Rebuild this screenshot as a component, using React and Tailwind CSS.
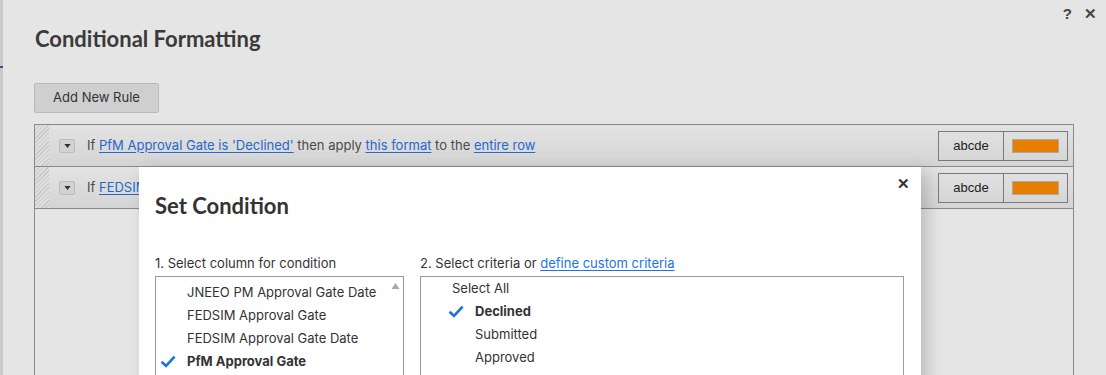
import React from "react";

const Check = ({ className }) => (
  <svg viewBox="0 0 16 13" className={className}>
    <path d="M1.6 6.8 L6 11 L14.6 1.6" fill="none" stroke="currentColor" strokeWidth="2.6" strokeLinejoin="miter" />
  </svg>
);

const DropBtn = () => (
  <div className="w-[16px] h-[14px] rounded-[2px] border border-[#bcbcbc] bg-[#d2d2d2] flex items-center justify-center shrink-0">
    <svg viewBox="0 0 8 5" className="w-[7px] h-[4px]">
      <path d="M0 0 L8 0 L4 5 Z" fill="#333" />
    </svg>
  </div>
);

const Hatch = () => (
  <div className="w-[14px] self-stretch shrink-0 bg-[repeating-linear-gradient(135deg,#c9c9c9_0px,#c9c9c9_1px,#dedede_1px,#dedede_3px)]" />
);

const Sample = () => (
  <div className="ml-auto mr-[5px] flex h-[30px] border border-[#7a7a7a]">
    <div className="w-[65px] border-r border-[#7a7a7a] flex items-center justify-center text-[13px] text-[#222] font-['Liberation_Sans',sans-serif]">
      abcde
    </div>
    <div className="w-[63px] flex items-center justify-center">
      <div className="w-[47px] h-[14px] bg-[#e67e00] border border-[#a9a9a9]" />
    </div>
  </div>
);

const Link = ({ children }) => <span className="text-[#2468cc] underline underline-offset-2">{children}</span>;

const Row = ({ children }) => (
  <div className="h-[42px] border-b border-[#8a8a8a] flex items-center bg-[linear-gradient(#e3e3e3,#d4d4d4)]">
    <Hatch />
    <div className="ml-[10px]">
      <DropBtn />
    </div>
    <div className="ml-[12px] text-[13px] text-[#4a4a4a] whitespace-nowrap">{children}</div>
    <Sample />
  </div>
);

export default function App() {
  return (
    <div className="w-[1106px] h-[375px] overflow-hidden flex bg-[#c9c9c9] font-['Inter',sans-serif]">
      <div className="w-[3px] shrink-0">
        <div className="mt-[66px] h-[2px] bg-[#3c4f86]" />
      </div>
      <div className="flex-1 bg-[#e5e5e5] relative">
        <div className="flex justify-end gap-[12px] pr-[9px] pt-[3px] h-[24px] text-[15px] font-bold text-[#444] font-['Liberation_Sans',sans-serif]">
          <span>?</span>
          <span>✕</span>
        </div>
        <div className="ml-[32px] mt-[0px] text-[22px] leading-[30px] font-bold text-[#3a3a3a] font-['Lato',sans-serif]">
          Conditional Formatting
        </div>
        <div className="ml-[31px] mt-[29px] w-[125px] h-[30px] rounded-[2px] border border-[#b9b9b9] bg-[#cfcfcf] flex items-center justify-center text-[13px] text-[#333]">
          Add New Rule
        </div>
        <div className="ml-[31px] mt-[11px] w-[1040px] h-[300px] border-x border-t border-[#8a8a8a]">
          <Row>
            If <Link>PfM Approval Gate is 'Declined'</Link> then apply <Link>this format</Link> to the <Link>entire row</Link>
          </Row>
          <Row>
            If <Link>FEDSIM Approval Gate is 'Declined'</Link> then apply <Link>this format</Link> to the <Link>entire row</Link>
          </Row>
        </div>

        <div className="absolute left-[136px] top-[167px] w-[782px] h-[260px] bg-white shadow-[6px_4px_16px_rgba(0,0,0,0.18)]">
          <div className="absolute right-[11px] top-[6px] text-[15px] font-bold text-[#333] font-['Liberation_Sans',sans-serif]">✕</div>
          <div className="pl-[16px] pt-[24px] text-[22px] leading-[30px] font-bold text-[#333] font-['Lato',sans-serif]">
            Set Condition
          </div>
          <div className="flex gap-[16px] pl-[16px] mt-[33px]">
            <div className="w-[249px]">
              <div className="text-[13px] leading-[18px] text-[#333] mb-[4px]">1. Select column for condition</div>
              <div className="relative h-[120px] border border-[#999] pt-[4px] text-[13px] text-[#333]">
                <svg viewBox="0 0 8 6" className="absolute right-[3px] top-[6px] w-[9px] h-[6px]">
                  <path d="M0 6 L4 0 L8 6 Z" fill="#a8a8a8" />
                </svg>
                {["JNEEO PM Approval Gate Date", "FEDSIM Approval Gate", "FEDSIM Approval Gate Date"].map((t) => (
                  <div key={t} className="h-[23px] flex items-center pl-[31px]">{t}</div>
                ))}
                <div className="h-[23px] flex items-center">
                  <Check className="w-[16px] h-[13px] ml-[4px] mr-[11px] text-[#1a73e8]" />
                  <span className="font-bold">PfM Approval Gate</span>
                </div>
              </div>
            </div>
            <div className="w-[484px]">
              <div className="text-[13px] leading-[18px] text-[#333] mb-[4px]">
                2. Select criteria or <span className="text-[#1a73e8] underline underline-offset-2">define custom criteria</span>
              </div>
              <div className="h-[120px] border border-[#999] text-[13px] text-[#333]">
                <div className="h-[23px] flex items-center pl-[31px]">Select All</div>
                <div className="h-[23px] flex items-center">
                  <Check className="w-[16px] h-[13px] ml-[27px] mr-[11px] text-[#1a73e8]" />
                  <span className="font-bold">Declined</span>
                </div>
                <div className="h-[23px] flex items-center pl-[54px]">Submitted</div>
                <div className="h-[23px] flex items-center pl-[54px]">Approved</div>
              </div>
            </div>
          </div>
        </div>
      </div>
    </div>
  );
}
